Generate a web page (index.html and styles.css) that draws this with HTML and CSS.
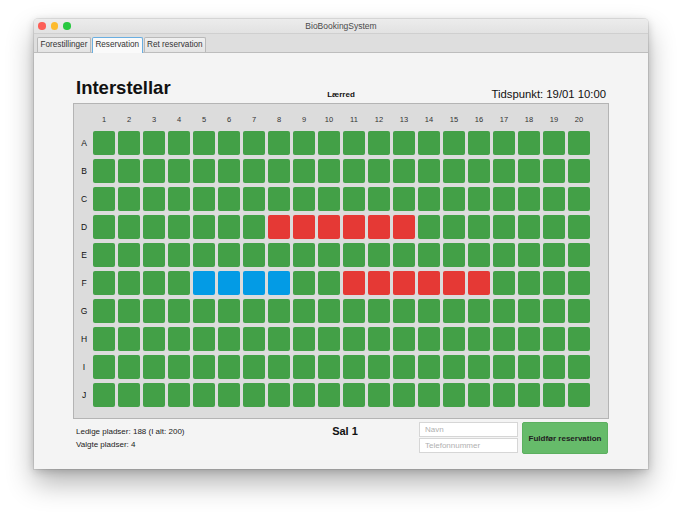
FILE: index.html
```html
<!DOCTYPE html>
<html>
<head>
<meta charset="utf-8">
<link rel="stylesheet" href="styles.css">
</head>
<body>
<div class="window">
  <div class="titlebar">
    <div class="lights"><span class="light red"></span><span class="light yellow"></span><span class="light green"></span></div>
    <div class="wtitle">BioBookingSystem</div>
  </div>
  <div class="tabbar">
    <div class="tab">Forestillinger</div>
    <div class="tab active">Reservation</div>
    <div class="tab">Ret reservation</div>
  </div>
  <div class="content">
    <div class="header">
      <h1 class="movie">Interstellar</h1>
      <div class="screen">Lærred</div>
      <div class="time">Tidspunkt: 19/01 10:00</div>
    </div>
    <div class="hall">
      <span class="col"></span><span class="col">1</span><span class="col">2</span><span class="col">3</span><span class="col">4</span><span class="col">5</span><span class="col">6</span><span class="col">7</span><span class="col">8</span><span class="col">9</span><span class="col">10</span><span class="col">11</span><span class="col">12</span><span class="col">13</span><span class="col">14</span><span class="col">15</span><span class="col">16</span><span class="col">17</span><span class="col">18</span><span class="col">19</span><span class="col">20</span>

      <span class="lbl">A</span><i class="s"></i><i class="s"></i><i class="s"></i><i class="s"></i><i class="s"></i><i class="s"></i><i class="s"></i><i class="s"></i><i class="s"></i><i class="s"></i><i class="s"></i><i class="s"></i><i class="s"></i><i class="s"></i><i class="s"></i><i class="s"></i><i class="s"></i><i class="s"></i><i class="s"></i><i class="s"></i>

      <span class="lbl">B</span><i class="s"></i><i class="s"></i><i class="s"></i><i class="s"></i><i class="s"></i><i class="s"></i><i class="s"></i><i class="s"></i><i class="s"></i><i class="s"></i><i class="s"></i><i class="s"></i><i class="s"></i><i class="s"></i><i class="s"></i><i class="s"></i><i class="s"></i><i class="s"></i><i class="s"></i><i class="s"></i>

      <span class="lbl">C</span><i class="s"></i><i class="s"></i><i class="s"></i><i class="s"></i><i class="s"></i><i class="s"></i><i class="s"></i><i class="s"></i><i class="s"></i><i class="s"></i><i class="s"></i><i class="s"></i><i class="s"></i><i class="s"></i><i class="s"></i><i class="s"></i><i class="s"></i><i class="s"></i><i class="s"></i><i class="s"></i>

      <span class="lbl">D</span><i class="s"></i><i class="s"></i><i class="s"></i><i class="s"></i><i class="s"></i><i class="s"></i><i class="s"></i><i class="s r"></i><i class="s r"></i><i class="s r"></i><i class="s r"></i><i class="s r"></i><i class="s r"></i><i class="s"></i><i class="s"></i><i class="s"></i><i class="s"></i><i class="s"></i><i class="s"></i><i class="s"></i>

      <span class="lbl">E</span><i class="s"></i><i class="s"></i><i class="s"></i><i class="s"></i><i class="s"></i><i class="s"></i><i class="s"></i><i class="s"></i><i class="s"></i><i class="s"></i><i class="s"></i><i class="s"></i><i class="s"></i><i class="s"></i><i class="s"></i><i class="s"></i><i class="s"></i><i class="s"></i><i class="s"></i><i class="s"></i>

      <span class="lbl">F</span><i class="s"></i><i class="s"></i><i class="s"></i><i class="s"></i><i class="s b"></i><i class="s b"></i><i class="s b"></i><i class="s b"></i><i class="s"></i><i class="s"></i><i class="s r"></i><i class="s r"></i><i class="s r"></i><i class="s r"></i><i class="s r"></i><i class="s r"></i><i class="s"></i><i class="s"></i><i class="s"></i><i class="s"></i>

      <span class="lbl">G</span><i class="s"></i><i class="s"></i><i class="s"></i><i class="s"></i><i class="s"></i><i class="s"></i><i class="s"></i><i class="s"></i><i class="s"></i><i class="s"></i><i class="s"></i><i class="s"></i><i class="s"></i><i class="s"></i><i class="s"></i><i class="s"></i><i class="s"></i><i class="s"></i><i class="s"></i><i class="s"></i>

      <span class="lbl">H</span><i class="s"></i><i class="s"></i><i class="s"></i><i class="s"></i><i class="s"></i><i class="s"></i><i class="s"></i><i class="s"></i><i class="s"></i><i class="s"></i><i class="s"></i><i class="s"></i><i class="s"></i><i class="s"></i><i class="s"></i><i class="s"></i><i class="s"></i><i class="s"></i><i class="s"></i><i class="s"></i>

      <span class="lbl">I</span><i class="s"></i><i class="s"></i><i class="s"></i><i class="s"></i><i class="s"></i><i class="s"></i><i class="s"></i><i class="s"></i><i class="s"></i><i class="s"></i><i class="s"></i><i class="s"></i><i class="s"></i><i class="s"></i><i class="s"></i><i class="s"></i><i class="s"></i><i class="s"></i><i class="s"></i><i class="s"></i>

      <span class="lbl">J</span><i class="s"></i><i class="s"></i><i class="s"></i><i class="s"></i><i class="s"></i><i class="s"></i><i class="s"></i><i class="s"></i><i class="s"></i><i class="s"></i><i class="s"></i><i class="s"></i><i class="s"></i><i class="s"></i><i class="s"></i><i class="s"></i><i class="s"></i><i class="s"></i><i class="s"></i><i class="s"></i>
    </div>
    <div class="footer">
      <div class="stats">
        <div>Ledige pladser: 188 (I alt: 200)</div>
        <div>Valgte pladser: 4</div>
      </div>
      <div class="sal">Sal 1</div>
      <div class="spacer"></div>
      <div class="inputs">
        <input class="field" type="text" placeholder="Navn">
        <input class="field" type="text" placeholder="Telefonnummer">
      </div>
      <button class="submit">Fuldfør reservation</button>
    </div>
  </div>
</div>
</body>
</html>
```

FILE: styles.css
```css
* { box-sizing: border-box; }
html, body { margin: 0; padding: 0; }
body {
  background: #ffffff;
  font-family: "Liberation Sans", Arial, sans-serif;
  color: #222;
  width: 682px;
  height: 518px;
  overflow: hidden;
}
.window {
  margin: 19px 0 0 34px;
  width: 614px;
  height: 450px;
  background: #f4f4f4;
  border-radius: 4px 4px 0 0;
  box-shadow: 0 14px 28px rgba(0,0,0,0.30), 0 2px 8px rgba(0,0,0,0.18), 0 0 0 1px rgba(0,0,0,0.08);
  display: flex;
  flex-direction: column;
  overflow: hidden;
}
.titlebar {
  height: 14px;
  background: linear-gradient(#ececec, #e2e2e2);
  position: relative;
  display: flex;
  align-items: center;
  justify-content: center;
}
.lights {
  position: absolute;
  left: 4px;
  top: 3px;
  display: flex;
  gap: 5px;
}
.light {
  width: 7.5px;
  height: 7.5px;
  border-radius: 50%;
  display: block;
}
.red { background: #fc5f57; }
.yellow { background: #fdbb2e; }
.green { background: #28c840; }
.wtitle {
  font-size: 8.5px;
  color: #4a4a4a;
  line-height: 14px;
}
.tabbar {
  height: 20px;
  background: #dedede;
  border-top: 1px solid #cfcfcf;
  border-bottom: 1px solid #bdbdbd;
  display: flex;
  align-items: flex-end;
  gap: 1px;
  padding-left: 3px;
}
.tab {
  height: 15px;
  padding: 0 2.5px;
  font-size: 8.2px;
  line-height: 14px;
  color: #333;
  background: linear-gradient(#f0f0f0, #e4e4e4);
  border: 1px solid #b9b9b9;
  border-bottom: none;
  border-radius: 2px 2px 0 0;
  margin-bottom: 0;
}
.tab.active {
  background: #fafafa;
  border-color: #6aaee0;
  border-bottom: none;
  height: 16px;
  margin-bottom: -1px;
}
.content {
  flex: 1;
  padding: 24px 39px 0 39px;
  display: flex;
  flex-direction: column;
}
.header {
  height: 26px;
  display: flex;
  align-items: flex-end;
  justify-content: space-between;
  position: relative;
}
.movie {
  margin: 0 0 5px 3px;
  font-size: 18.5px;
  line-height: 20px;
  font-weight: bold;
  color: #111;
}
.screen {
  position: absolute;
  left: 0;
  right: 0;
  bottom: 4px;
  text-align: center;
  font-size: 8px;
  line-height: 9px;
  font-weight: bold;
  color: #111;
}
.time {
  margin: 0 3px 2.5px 0;
  font-size: 11.3px;
  line-height: 13px;
  color: #111;
}
.hall {
  width: 536px;
  background: #dcdcdc;
  border: 1px solid #b4b4b4;
  display: grid;
  grid-template-columns: 16px repeat(20, 22px);
  grid-template-rows: 23px repeat(10, 24px);
  column-gap: 3px;
  row-gap: 4px;
  padding: 0 0 11px 0;
}
.col {
  font-size: 7.5px;
  color: #333;
  display: flex;
  align-items: center;
  justify-content: center;
  padding-top: 8px;
}
.lbl {
  font-size: 8.5px;
  color: #111;
  display: flex;
  align-items: center;
  justify-content: center;
  padding-left: 4px;
}
.s {
  display: block;
  background: #43a047;
  border-radius: 2px;
}
.s.r { background: #e53935; }
.s.b { background: #039be5; }
.footer {
  margin-top: 3px;
  height: 32px;
  display: flex;
  align-items: flex-start;
}
.stats {
  width: 246px;
  padding: 2.5px 0 0 3px;
  font-size: 8px;
  line-height: 13px;
  color: #222;
}
.sal {
  width: 52px;
  text-align: center;
  padding-top: 2.5px;
  font-size: 11px;
  line-height: 13px;
  font-weight: bold;
  color: #111;
}
.spacer { flex: 1; }
.inputs {
  width: 99px;
  display: flex;
  flex-direction: column;
  gap: 1px;
  margin-right: 4px;
}
.field {
  width: 99px;
  height: 15px;
  margin: 0;
  padding: 0 0 0 5px;
  border: 1px solid #d6d6d6;
  background: #ffffff;
  font-family: "Liberation Sans", Arial, sans-serif;
  font-size: 8px;
  color: #333;
  outline: none;
}
.field::placeholder { color: #b0b0b0; }
.submit {
  width: 86px;
  height: 32px;
  margin: 0 1px 0 0;
  padding: 0;
  background: #66bb6a;
  border: 1px solid #5cb060;
  border-radius: 2px;
  font-family: "Liberation Sans", Arial, sans-serif;
  font-size: 8px;
  font-weight: bold;
  color: #222;
}
```
